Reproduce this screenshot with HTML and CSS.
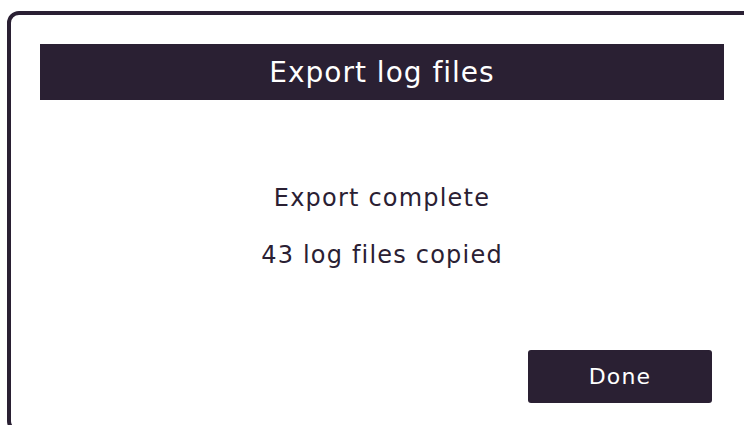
FILE: index.html
```html
<!DOCTYPE html>
<html lang="en">
<head>
<meta charset="utf-8">
<title>Export log files</title>
<link rel="stylesheet" href="styles.css">
</head>
<body>
  <div class="dialog">
    <div class="dialog-title">Export log files</div>
    <div class="dialog-body">
      <p class="message">Export complete</p>
      <p class="message">43 log files copied</p>
    </div>
    <div class="dialog-actions">
      <button class="btn-primary" type="button">Done</button>
    </div>
  </div>
</body>
</html>
```

FILE: styles.css
```css
html, body {
  margin: 0;
  padding: 0;
  background: #ffffff;
  overflow: hidden;
}

body {
  font-family: "DejaVu Sans", "Open Sans", sans-serif;
  color: #2a2033;
  width: 744px;
  height: 425px;
}

.dialog {
  box-sizing: border-box;
  margin: 11px 0 0 7px;
  width: 750px;
  height: 422px;
  border: 4px solid #2a2033;
  border-radius: 12px;
  padding: 29px 29px 0;
  display: flex;
  flex-direction: column;
}

.dialog-title {
  height: 56px;
  background: #2a2033;
  color: #ffffff;
  display: flex;
  align-items: center;
  justify-content: center;
  font-size: 28px;
  letter-spacing: 1px;
}

.dialog-body {
  display: flex;
  flex-direction: column;
  align-items: center;
  gap: 25px;
  padding-top: 82px;
}

.message {
  margin: 0;
  font-size: 24px;
  line-height: 32px;
  letter-spacing: 1.2px;
}

.dialog-actions {
  display: flex;
  justify-content: flex-end;
  padding-right: 12px;
  margin-top: 79px;
}

.btn-primary {
  width: 184px;
  height: 53px;
  border: none;
  border-radius: 3px;
  background: #2a2033;
  color: #ffffff;
  font-family: inherit;
  font-size: 22px;
  letter-spacing: 1.2px;
  cursor: pointer;
}
```
